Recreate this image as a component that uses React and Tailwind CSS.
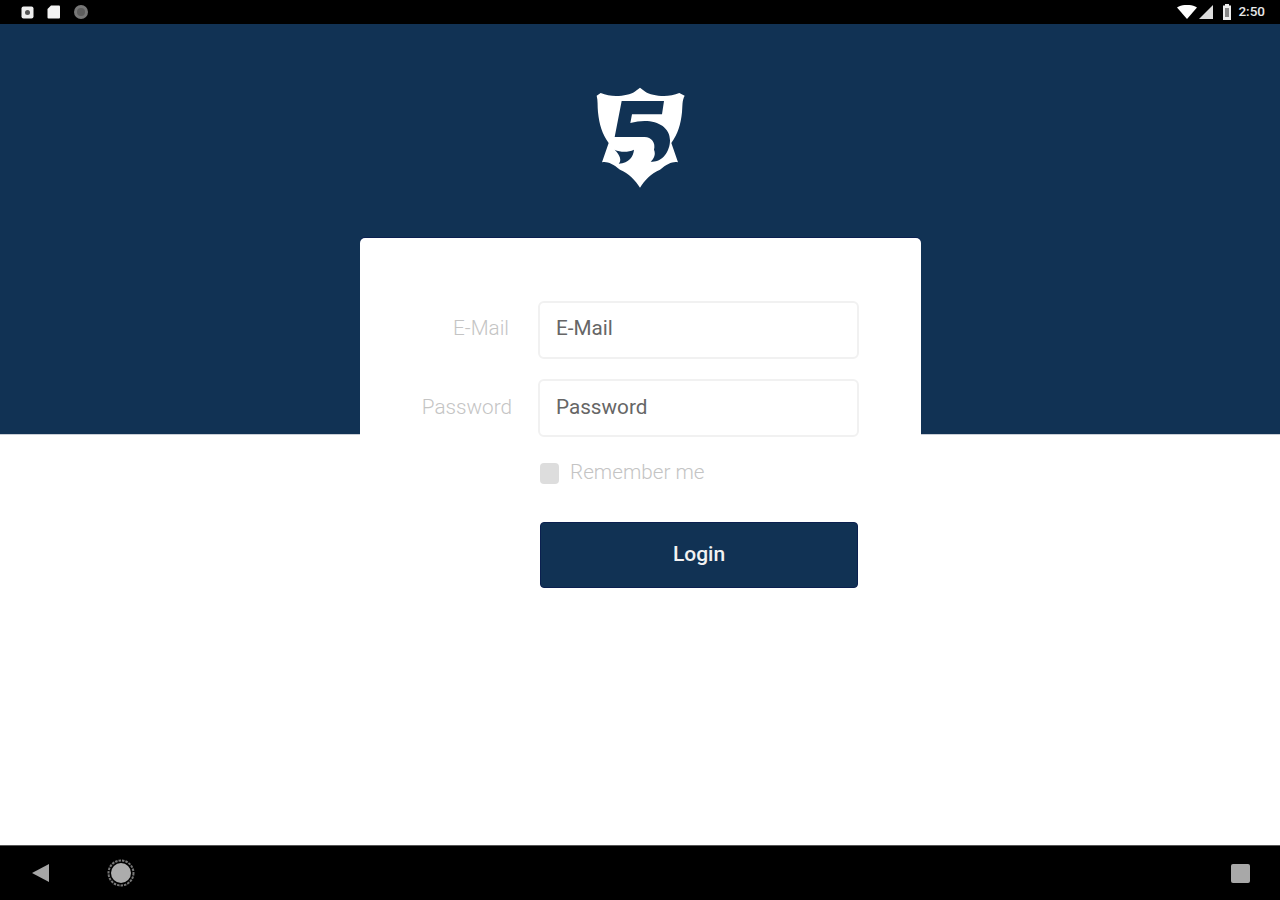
const font = { fontFamily: "Roboto, sans-serif" };

function Logo() {
  return (
    <svg width="120" height="125" viewBox="0 0 360 375" className="block" aria-label="logo">
      <path fill="#fff" d="M180 38 L196 50 C215 62 262 70 298 54 L314 62 C306 76 308 92 306 112 C302 150 294 176 274 204 L294 262 C280 258 262 266 240 284 C214 294 194 316 180 338 C166 316 146 294 120 284 C98 266 80 258 66 262 L86 204 C66 176 58 150 54 112 C52 92 54 76 50 62 L62 54 C98 70 145 62 164 50Z" />
      <path fill="#113254" d="M125 78 L252 78 L246 118 L156 118 L151 144 C214 126 270 148 270 196 C270 232 244 264 212 260 C222 250 228 238 222 224 C228 204 214 186 194 186 L104 186 Z" />
      <path fill="#113254" d="M104 224 C122 232 144 232 162 224 C160 244 148 264 116 266 C126 256 120 240 104 224Z" />
    </svg>
  );
}

function Field({ label, pr, shift }) {
  return (
    <div className="flex items-center h-[58px]">
      <div className={`w-[152px] pl-[60px] text-right text-[20.7px] font-light text-[#c4c4c4] whitespace-nowrap ${shift} ${pr}`}>{label}</div>
      <div className="ml-[26px] w-[321px] h-[58px] flex items-center pl-[16px] bg-white border-2 border-[#f1f1f1] rounded-[6px] text-[20.7px] text-[#666666]">
        <span className={shift}>{label}</span>
      </div>
    </div>
  );
}

export default function App() {
  return (
    <div className="w-[1280px] h-[900px] flex flex-col bg-white overflow-hidden" style={font}>
      <div className="h-6 bg-black flex items-center justify-between pl-[21px] pr-[15px] shrink-0">
        <div className="flex items-center gap-[13px]">
          <svg width="13" height="13" viewBox="0 0 13 13"><rect x="0.5" y="0.5" width="12" height="12" rx="2" fill="#eee" /><circle cx="6.5" cy="6.5" r="2.5" fill="#555" /></svg>
          <svg width="13" height="14" viewBox="0 0 13 14"><path fill="#f4f4f4" d="M4 0.5 H12 a1 1 0 0 1 1 1 V12.5 a1 1 0 0 1-1 1 H1.5 a1 1 0 0 1-1-1 V4Z" /></svg>
          <svg width="16" height="16" viewBox="0 0 16 16"><circle cx="8" cy="8" r="7" fill="#777" /><circle cx="8" cy="8" r="4" fill="#5d5d5d" /></svg>
        </div>
        <div className="flex items-center">
          <svg width="20" height="14" viewBox="0 0 20 14"><path fill="#fff" d="M0 2.5 C6 -1 14 -1 20 2.5 L10 14Z" /></svg>
          <svg width="16" height="14" viewBox="0 0 16 14" className="ml-[1px]"><path fill="#ddd" d="M15 0 V14 H1Z" /></svg>
          <svg width="10" height="16" viewBox="0 0 10 16" className="ml-[8px]"><path fill="#eee" d="M3 0 H7 V1.5 H9 V16 H1 V1.5 H3Z" /><rect x="3" y="4" width="4" height="9" fill="#888" /></svg>
          <span className="ml-[6px] text-[13.5px] font-medium leading-none text-[#e8e8e8]">2:50</span>
        </div>
      </div>

      <div className="h-[411px] bg-[#113254] shrink-0 flex justify-center pt-[51px] border-b border-[#c9ced6]">
        <Logo />
      </div>

      <div className="flex-1 bg-white">
        <div className="-mt-[197px] relative w-[561px] ml-[360px] bg-white rounded-t-[5px] shadow-[0_-1px_0_#0b2050] pt-[63px]">
          <div className="flex flex-col gap-[20px]">
            <Field label="E-Mail" pr="pr-[3px]" shift="-translate-y-[1px]" />
            <Field label="Password" pr="pr-0" shift="translate-y-0" />
          </div>
          <div className="flex items-center ml-[180px] mt-[25px] h-[22px]">
            <div className="w-[19px] h-[21px] rounded-[4px] bg-[#dddddd]" />
            <span className="ml-[11px] text-[20.7px] font-light text-[#c4c4c4] leading-none -translate-y-[1px]">Remember me</span>
          </div>
          <button className="block ml-[180px] mt-[38px] w-[318px] h-[66px] rounded-[4px] bg-[#113254] text-[#f2f2f2] text-[21px] font-medium border border-[#0b2050]">Login</button>
        </div>
      </div>

      <div className="h-[55px] bg-black shrink-0 flex items-center justify-between pl-[32px] pr-[30px] border-t border-[#555555]">
        <div className="flex items-center">
          <svg width="18" height="20" viewBox="0 0 18 20"><path fill="#a6a6a6" d="M0 10 L17 1 V19Z" /></svg>
          <svg width="28" height="28" viewBox="0 0 28 28" className="ml-[57px]"><circle cx="14" cy="14" r="12.5" fill="none" stroke="#777" strokeWidth="2" strokeDasharray="2.5 1" /><circle cx="14" cy="14" r="10" fill="#acacac" /></svg>
        </div>
        <div className="w-[19px] h-[19px] rounded-[2px] bg-[#a8a8a8]" />
      </div>
    </div>
  );
}
